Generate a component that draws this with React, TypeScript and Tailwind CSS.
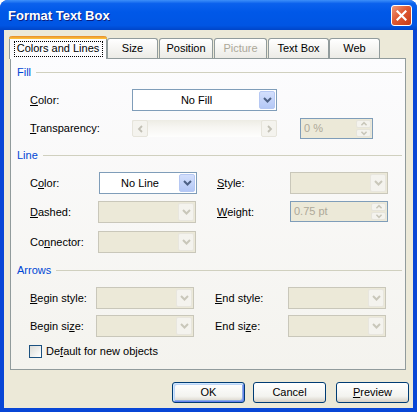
import React from "react";

function Chevron({ color }: { color: string }) {
  return (
    <svg width="9" height="6" viewBox="0 0 9 6">
      <path d="M1 1 L4.5 4.5 L8 1" stroke={color} strokeWidth="2" fill="none" />
    </svg>
  );
}

function Arrow({ dir, color }: { dir: "left" | "right" | "up" | "down"; color: string }) {
  const paths = {
    left: "M5 1 L2 4 L5 7",
    right: "M2 1 L5 4 L2 7",
    up: "M1 5 L4 2 L7 5",
    down: "M1 2 L4 5 L7 2",
  };
  const small = dir === "up" || dir === "down";
  return (
    <svg width={small ? 8 : 7} height={small ? 6 : 8} viewBox={small ? "0 0 8 7" : "0 0 7 8"}>
      <path d={paths[dir]} stroke={color} strokeWidth="1.8" fill="none" />
    </svg>
  );
}

function Combo({ className, value }: { className: string; value?: string }) {
  if (value) {
    return (
      <div className={`flex h-[22px] border border-[#7F9DB9] bg-white p-px ${className}`}>
        <div className="flex-1 flex items-center justify-center">{value}</div>
        <div className="w-[16px] rounded-[2px] border border-[#B6C8F3] bg-[linear-gradient(180deg,#D3DFFC,#B4C8F6)] flex items-center justify-center">
          <Chevron color="#4D6185" />
        </div>
      </div>
    );
  }
  return (
    <div className={`flex h-[22px] border border-[#C9C7BA] bg-[#ECE9D8] p-px ${className}`}>
      <div className="flex-1" />
      <div className="w-[16px] rounded-[2px] border border-[#E8E6DE] bg-[#F4F3EE] flex items-center justify-center">
        <Chevron color="#C9C7BA" />
      </div>
    </div>
  );
}

function Spin({ className, value }: { className: string; value: string }) {
  return (
    <div className={`flex h-[21px] border border-[#7F9DB9] bg-[#ECE9D8] p-px ${className}`}>
      <div className="flex-1 flex items-center pl-[2px] text-[#ACA899]">{value}</div>
      <div className="w-[15px] flex flex-col gap-px">
        <div className="flex-1 rounded-[2px] border border-[#E6E4DB] bg-[#F4F3EE] flex items-center justify-center">
          <Arrow dir="up" color="#C9C7BA" />
        </div>
        <div className="flex-1 rounded-[2px] border border-[#E6E4DB] bg-[#F4F3EE] flex items-center justify-center">
          <Arrow dir="down" color="#C9C7BA" />
        </div>
      </div>
    </div>
  );
}

function GroupHeader({ title, className }: { title: string; className: string }) {
  return (
    <div className={`flex items-center h-[14px] pl-[6px] pr-[3px] ${className}`}>
      <span className="text-[#0046D5]">{title}</span>
      <div className="flex-1 h-px bg-[#D0D0BF] ml-[5px]" />
    </div>
  );
}

function Key({ k }: { k: string }) {
  return <span className="underline underline-offset-[1px]">{k}</span>;
}

function Tab({ className, label, disabled }: { className: string; label: string; disabled?: boolean }) {
  return (
    <div
      className={`h-[20px] flex items-center justify-center rounded-t-[3px] border border-b-0 border-[#919B9C] bg-[linear-gradient(180deg,#FFFFFF,#ECEBE6)] ${className} ${disabled ? "text-[#ACA899]" : ""}`}
    >
      {label}
    </div>
  );
}

function Button({ className, children, isDefault }: { className: string; children: React.ReactNode; isDefault?: boolean }) {
  return (
    <div
      className={`h-[21px] w-[73px] rounded-[3px] border border-[#003C74] bg-[linear-gradient(180deg,#FFFFFF_0%,#F3F3EF_70%,#D6D0C5_100%)] flex items-center justify-center ${className} ${isDefault ? "shadow-[inset_1px_1px_0_#CEE7FF,inset_-1px_-1px_0_#6982EE,inset_2px_2px_0_#BCD4F6,inset_-2px_-2px_0_#89ADE4]" : ""}`}
    >
      {children}
    </div>
  );
}

export default function App() {
  return (
    <div className="w-[417px] h-[412px] bg-white font-['Liberation_Sans',Arial,sans-serif] text-[11px] text-black leading-none">
      <div className="w-full h-full rounded-t-[8px] bg-[#0846D6] flex flex-col overflow-hidden">
        {/* title bar */}
        <div className="h-[30px] shrink-0 flex items-center justify-between pl-[8px] pr-[5px] bg-[linear-gradient(180deg,#3D8FF9_0%,#0B61ED_12%,#0058E8_40%,#0055E3_85%,#0045C8_100%)]">
          <span className="text-white font-bold text-[13px] pt-[1px] [text-shadow:1px_1px_0_#0A1E80]">Format Text Box</span>
          <div className="w-[21px] h-[21px] rounded-[3px] border border-white bg-[linear-gradient(135deg,#EE9A7C_0%,#E05A33_45%,#C63A16_100%)] flex items-center justify-center">
            <svg width="11" height="11" viewBox="0 0 11 11">
              <path d="M1.5 1.5 L9.5 9.5 M9.5 1.5 L1.5 9.5" stroke="white" strokeWidth="2.2" strokeLinecap="square" />
            </svg>
          </div>
        </div>

        {/* body */}
        <div className="flex-1 mx-[4px] mb-[4px] bg-[#ECE9D8] flex flex-col">
          {/* tabs */}
          <div className="flex items-end pl-[5px] pt-[6px]">
            <div className="relative z-10 -mb-px h-[23px] w-[98px] rounded-t-[3px] border border-b-0 border-[#919B9C] border-t-0 bg-[#FCFCFE] flex flex-col">
              <div className="h-[3px] rounded-t-[3px] bg-[linear-gradient(180deg,#E68B2C,#FFC73C)] -mx-px" />
              <div className="flex-1 flex items-center justify-center pb-[1px]">
                <span className="border border-dotted border-black h-[16px] w-[89px] flex items-center justify-center">
                  Colors and Lines
                </span>
              </div>
            </div>
            <Tab className="w-[51px]" label="Size" />
            <Tab className="ml-[1px] w-[54px]" label="Position" />
            <Tab className="ml-[1px] w-[53px]" label="Picture" disabled />
            <Tab className="ml-[1px] w-[61px]" label="Text Box" />
            <Tab className="w-[51px]" label="Web" />
          </div>

          {/* panel */}
          <div className="ml-[6px] w-[396px] h-[312px] border border-[#919B9C] bg-[linear-gradient(180deg,#FCFCFE,#F4F3EE)] flex flex-col">
            <GroupHeader title="Fill" className="mt-[6px]" />
            <div className="mt-[10px] h-[22px] flex items-center pl-[19px]">
              <span className="w-[102px]">
                <Key k="C" />olor:
              </span>
              <Combo className="w-[145px]" value="No Fill" />
            </div>
            <div className="mt-[7px] h-[21px] flex items-center pl-[19px]">
              <span className="w-[102px]">
                <Key k="T" />ransparency:
              </span>
              <div className="w-[145px] h-[17px] flex bg-[linear-gradient(180deg,#EDECE4_0%,#F6F5F1_40%,#FEFEFD_100%)]">
                <div className="w-[16px] rounded-[2px] border border-[#E6E4DB] bg-[#F4F3EE] flex items-center justify-center">
                  <Arrow dir="left" color="#C2C0B5" />
                </div>
                <div className="flex-1" />
                <div className="w-[16px] rounded-[2px] border border-[#E6E4DB] bg-[#F4F3EE] flex items-center justify-center">
                  <Arrow dir="right" color="#C2C0B5" />
                </div>
              </div>
              <Spin className="ml-[23px] w-[73px]" value="0 %" />
            </div>

            <GroupHeader title="Line" className="mt-[9px]" />
            <div className="mt-[10px] h-[22px] flex items-center pl-[19px]">
              <span className="w-[69px]">
                C<Key k="o" />lor:
              </span>
              <Combo className="w-[98px]" value="No Line" />
              <span className="ml-[20px] w-[73px]">
                <Key k="S" />tyle:
              </span>
              <Combo className="w-[98px]" />
            </div>
            <div className="mt-[7px] h-[22px] flex items-center pl-[19px]">
              <span className="w-[68px]">
                <Key k="D" />ashed:
              </span>
              <Combo className="w-[98px]" />
              <span className="ml-[21px] w-[73px]">
                <Key k="W" />eight:
              </span>
              <div className="h-[22px] flex items-start">
                <Spin className="w-[98px]" value="0.75 pt" />
              </div>
            </div>
            <div className="mt-[8px] h-[22px] flex items-center pl-[19px]">
              <span className="w-[68px]">
                Co<Key k="n" />nector:
              </span>
              <Combo className="w-[98px]" />
            </div>

            <GroupHeader title="Arrows" className="mt-[10px]" />
            <div className="mt-[10px] h-[22px] flex items-center pl-[19px]">
              <span className="w-[66px]">
                <Key k="B" />egin style:
              </span>
              <Combo className="w-[98px]" />
              <span className="ml-[21px] w-[73px]">
                <Key k="E" />nd style:
              </span>
              <Combo className="w-[98px]" />
            </div>
            <div className="mt-[6px] h-[22px] flex items-center pl-[19px]">
              <span className="w-[66px]">
                Begin si<Key k="z" />e:
              </span>
              <Combo className="w-[98px]" />
              <span className="ml-[21px] w-[73px]">
                End si<Key k="z" />e:
              </span>
              <Combo className="w-[98px]" />
            </div>
            <div className="mt-[8px] h-[13px] flex items-center pl-[18px]">
              <div className="w-[13px] h-[13px] border border-[#1C5180] bg-[linear-gradient(135deg,#DCDCD7,#FFFFFF)]" />
              <span className="ml-[4px]">
                De<Key k="f" />ault for new objects
              </span>
            </div>
          </div>

          {/* buttons */}
          <div className="mt-[12px] flex justify-end pr-[4px]">
            <Button className="" isDefault>
              OK
            </Button>
            <Button className="ml-[8px]">Cancel</Button>
            <Button className="ml-[10px]">
              <Key k="P" />review
            </Button>
          </div>
        </div>
      </div>
    </div>
  );
}
